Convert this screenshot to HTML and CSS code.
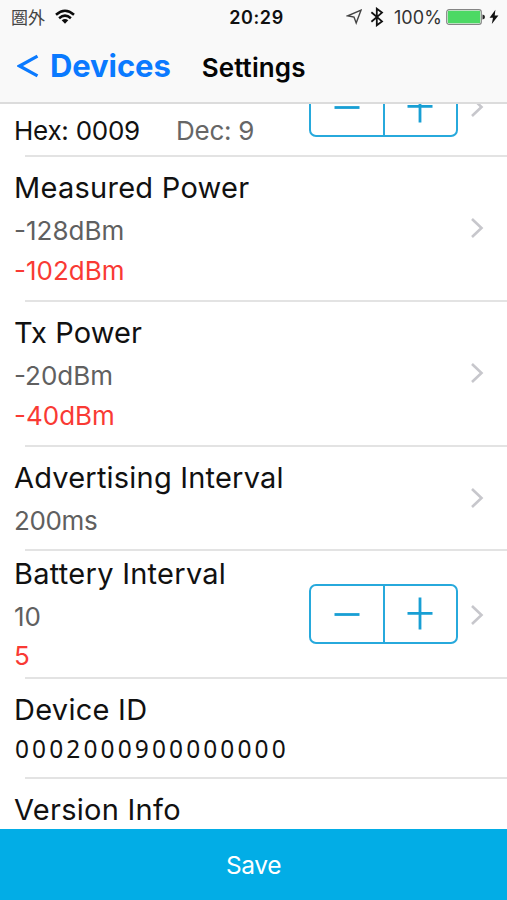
FILE: index.html
```html
<!DOCTYPE html>
<html lang="en">
<head>
<meta charset="utf-8">
<title>Settings</title>
<link rel="stylesheet" href="styles.css">
</head>
<body>
<div class="screen">
  <header class="header">
    <div class="status">
      <div class="status-left">
        <span class="carrier" lang="ja">圏外</span>
        <svg class="wifi" width="20" height="16" viewBox="0 0 20 16" fill="none" stroke="#0c0c0c" stroke-width="2.5"><path d="M1 5.8Q10-2.2 19 5.8M4.1 9.2Q10 4 15.9 9.2"/><path d="M6.7 11.3Q10 8.6 13.3 11.3L10 14.7Z" fill="#0c0c0c" stroke="none"/></svg>
      </div>
      <time class="clock">20:29</time>
      <div class="status-right">
        <svg class="locate" width="16" height="16" viewBox="0 0 16 16" fill="none" stroke="#444" stroke-width="1.4" stroke-linejoin="miter"><path d="M15 1.2L1.8 6.8L8 8L10.2 14Z"/></svg>
        <svg class="bluetooth" width="14" height="20" viewBox="0 0 14 20" fill="none" stroke="#111" stroke-width="1.8"><path d="M1.4 5.2L12 14.4L6.8 18.3V1.7L12 5.6L1.4 14.8"/></svg>
        <span class="percent">100%</span>
        <svg class="battery" width="40" height="16" viewBox="0 0 40 16"><rect x=".7" y=".7" width="34.6" height="14.6" rx="2.4" fill="#fff" stroke="#858585" stroke-width="1.2"/><rect x="1.8" y="1.8" width="32.4" height="12.4" rx="1" fill="#4cd964"/><path d="M36.5 5.4Q39 5.8 39 8T36.5 10.6Z" fill="#222"/></svg>
        <svg class="bolt" width="10" height="16" viewBox="0 0 10 16"><path d="M6.4 .8L.6 8.8H4L2.8 15L9.4 6.4H5.7Z" fill="#111"/></svg>
      </div>
    </div>
    <nav class="nav">
      <a class="back"><svg width="22" height="24" viewBox="0 0 22 24" fill="none" stroke="#0a7aff" stroke-width="3.2"><path d="M20.5 2.2L2.6 12L20.5 21.8"/></svg><span>Devices</span></a>
      <h1 class="title">Settings</h1>
    </nav>
  </header>

  <main class="list">
    <section class="row row-minor">
      <div class="pair"><span class="hex">Hex: 0009</span><span class="dec">Dec: 9</span></div>
      <div class="stepper"><button>
        <svg width="26" height="34" viewBox="0 0 26 34"><path d="M0.5 17.5H25.5"/></svg></button><button>
        <svg width="26" height="34" viewBox="0 0 26 34"><path d="M0.5 16.3H25.5M13 .5V32.5"/></svg></button></div>
      <svg class="chevron" width="14" height="22" viewBox="0 0 14 22"><path d="M2 2L11.5 11L2 20"/></svg>
    </section>
    <section class="row row-tall">
      <div class="text">
        <h2 class="label measured">Measured Power</h2>
        <p class="value">-128dBm</p>
        <p class="value changed">-102dBm</p>
      </div>
      <svg class="chevron" width="14" height="22" viewBox="0 0 14 22"><path d="M2 2L11.5 11L2 20"/></svg>
    </section>
    <section class="row row-tall">
      <div class="text">
        <h2 class="label tx">Tx Power</h2>
        <p class="value">-20dBm</p>
        <p class="value changed">-40dBm</p>
      </div>
      <svg class="chevron" width="14" height="22" viewBox="0 0 14 22"><path d="M2 2L11.5 11L2 20"/></svg>
    </section>
    <section class="row row-advertising">
      <div class="text">
        <h2 class="label advertising">Advertising Interval</h2>
        <p class="value">200ms</p>
      </div>
      <svg class="chevron" width="14" height="22" viewBox="0 0 14 22"><path d="M2 2L11.5 11L2 20"/></svg>
    </section>
    <section class="row row-battery">
      <div class="text">
        <h2 class="label interval">Battery Interval</h2>
        <p class="value">10</p>
        <p class="value changed">5</p>
      </div>
      <div class="stepper"><button>
        <svg width="26" height="34" viewBox="0 0 26 34"><path d="M0.5 17.5H25.5"/></svg></button><button>
        <svg width="26" height="34" viewBox="0 0 26 34"><path d="M0.5 16.3H25.5M13 .5V32.5"/></svg></button></div>
      <svg class="chevron" width="14" height="22" viewBox="0 0 14 22"><path d="M2 2L11.5 11L2 20"/></svg>
    </section>
    <section class="row row-device">
      <div class="text">
        <h2 class="label device">Device ID</h2>
        <p class="identifier">0002000900000000</p>
      </div>
    </section>
    <section class="row row-version">
      <div class="text"><h2 class="label version">Version Info</h2></div>
    </section>
  </main>
  <button class="save">Save</button>
</div>
</body>
</html>
```
FILE: styles.css
```css
* { box-sizing: border-box; }
body {
  margin: 0;
  background: #fff;
  font-family: Inter, "Liberation Sans", sans-serif;
  color: #111;
}
h1, h2, p { margin: 0; font-weight: 400; }
button { margin: 0; padding: 0; border: 0; background: none; font: inherit; }
svg { display: block; flex: none; }

.screen {
  display: flex;
  flex-direction: column;
  width: 507px;
  height: 900px;
  overflow: hidden;
}

.header {
  flex: none;
  height: 103px;
  background: #f9f9f9;
  border-bottom: 2px solid #dcdcdc;
}
.status {
  display: grid;
  grid-template-columns: 1fr auto 1fr;
  align-items: center;
  height: 34px;
  padding: 0 8px 0 11px;
}
.status-left, .status-right { display: flex; align-items: center; }
.status-right { justify-content: flex-end; }
.carrier {
  font: 17px/34px "Noto Sans CJK JP", sans-serif;
  color: #444;
}
.wifi { margin-left: 10px; }
.clock { margin-left: 3px; font-size: 18px; font-weight: 600; letter-spacing: .6px; }
.locate { margin-right: 8px; }
.bluetooth { margin-right: 10px; }
.percent { margin-right: 4px; font-size: 18px; letter-spacing: .1px; color: #333; }
.bolt { margin-left: 3px; }

.nav { display: flex; align-items: center; height: 64px; padding-left: 17px; }
.back {
  display: flex;
  align-items: center;
  gap: 11px;
  color: #0a7aff;
  font-size: 31px;
  line-height: 64px;
  letter-spacing: -.1px;
  font-weight: 700;
}
.title {
  margin-left: 31px;
  padding-top: 3px;
  font-size: 26px;
  line-height: 64px;
  letter-spacing: .1px;
  font-weight: 600;
  color: #050505;
}

.list { flex: 1; min-height: 0; overflow: hidden; }
.row {
  display: flex;
  align-items: center;
  padding: 0 23px 0 14px;
  background: linear-gradient(#e3e3e3, #e3e3e3) 25px 100% / 100% 2px no-repeat;
}
.text { flex: 1; align-self: flex-start; }
.header { height: 104px; }
.row-minor { height: 128px; margin-top: -75px; padding-top: 28px; }
.row-tall { height: 145px; }
.row-tall .text { padding-top: 11px; }
.row-tall .chevron { margin-bottom: 3px; }
.row-advertising { height: 104px; }
.row-advertising .text { padding-top: 11px; }
.row-advertising .chevron { margin-bottom: 3px; }
.row-battery { height: 128px; }
.row-battery .text { padding-top: 3px; }
.row-battery .stepper { margin-bottom: 2px; }
.row-device { height: 100px; }
.row-device .text { padding-top: 11px; }
.row-version .text { padding-top: 11px; }

.pair {
  flex: 1;
  align-self: flex-end;
  display: flex;
  gap: 36px;
  padding-bottom: 6px;
  font-size: 26px;
  line-height: 40px;
  letter-spacing: -.25px;
}
.dec { color: #666; }
.label {
  font-size: 29px;
  line-height: 40px;
  letter-spacing: .27px;
  margin-bottom: 3px;
  white-space: nowrap;
}
.tx { letter-spacing: .12px; }
.advertising { letter-spacing: .2px; }
.value { font-size: 26px; line-height: 40px; color: #606060; }
.row-advertising .value { letter-spacing: -.35px; }
.changed { color: #f93a34; }
.row-battery .changed { margin-top: -1px; }
.identifier {
  margin-top: -3px;
  font: 24.5px/38px "Noto Sans", sans-serif;
  letter-spacing: 3.1px;
  padding-left: 1px;
}

.stepper {
  display: flex;
  width: 149px;
  height: 60px;
  margin-right: 12px;
  border: 2px solid #27a9dc;
  border-radius: 7px;
}
.stepper button { flex: 1; display: flex; align-items: center; justify-content: center; }
.stepper button + button { border-left: 2px solid #27a9dc; }
.stepper path { fill: none; stroke: #189fd4; stroke-width: 2.8; }
.chevron path { fill: none; stroke: #c7c7cc; stroke-width: 2.6; }

.save {
  flex: none;
  height: 71px;
  background: #02ade6;
  color: #fff;
  font-size: 24.5px;
  letter-spacing: -.4px;
}
```
